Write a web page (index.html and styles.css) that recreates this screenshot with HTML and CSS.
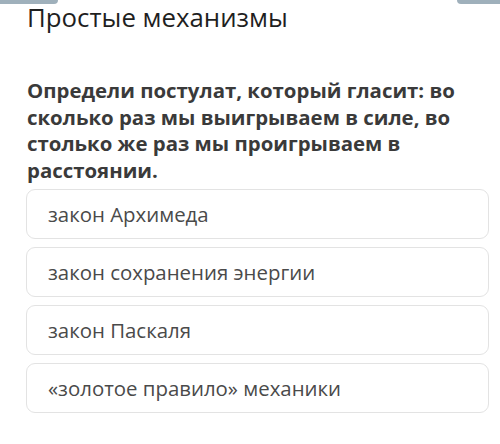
FILE: index.html
```html
<!DOCTYPE html>
<html lang="ru">
<head>
<meta charset="utf-8">
<title>Простые механизмы</title>
<link rel="stylesheet" href="styles.css">
</head>
<body>
<div class="topbar">
  <span class="tab tab-left"></span>
  <span class="tab tab-right"></span>
</div>
<main class="quiz">
  <h1 class="topic">Простые механизмы</h1>
  <p class="question">Определи постулат, который гласит: во сколько раз мы выигрываем в силе, во столько же раз мы проигрываем в расстоянии.</p>
  <ul class="options">
    <li class="option">закон Архимеда</li>
    <li class="option">закон сохранения энергии</li>
    <li class="option">закон Паскаля</li>
    <li class="option">«золотое правило» механики</li>
  </ul>
</main>
</body>
</html>
```
FILE: styles.css
```css
html, body {
  margin: 0;
  padding: 0;
  background: #ffffff;
}

body {
  width: 500px;
  height: 444px;
  overflow: hidden;
  font-family: "Open Sans", "Noto Sans", sans-serif;
}

.topbar {
  display: flex;
  justify-content: space-between;
  height: 4px;
}

.tab {
  display: block;
  height: 4px;
  background: #9fb0bb;
}

.tab-left {
  width: 58px;
  border-bottom-right-radius: 4px;
}

.tab-right {
  width: 43px;
  border-bottom-left-radius: 4px;
}

.quiz {
  padding: 0 11px 0 26px;
}

.topic {
  margin: 0 0 0 1px;
  font-size: 25.8px;
  line-height: 26px;
  font-weight: 400;
  color: #1f1f1f;
}

.question {
  margin: 47px 0 5px 1px;
  font-size: 20.4px;
  line-height: 26.7px;
  font-weight: 700;
  color: #3a3a3a;
}

.options {
  list-style: none;
  margin: 0;
  padding: 0;
  display: flex;
  flex-direction: column;
  gap: 8px;
}

.option {
  box-sizing: border-box;
  height: 50px;
  display: flex;
  align-items: center;
  padding: 0 20px 0 21px;
  border: 1px solid #e3e3e3;
  border-radius: 9px;
  font-size: 20.4px;
  color: #4a4a4a;
}
```
